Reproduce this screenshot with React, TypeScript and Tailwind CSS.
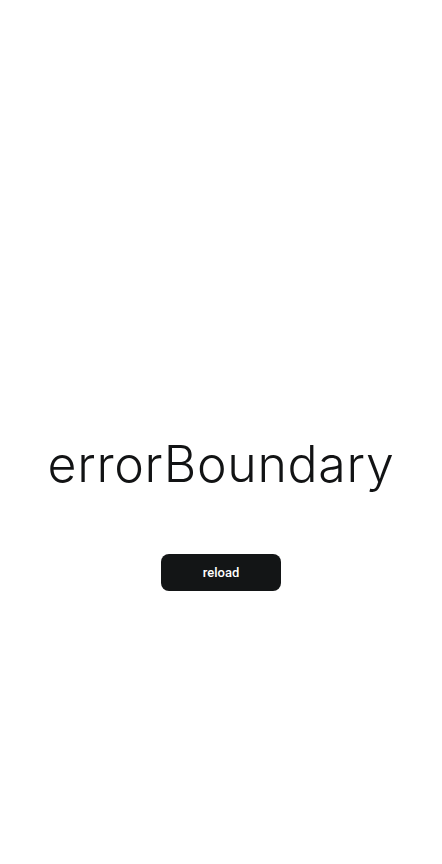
export default function App() {
  return (
    <div className="min-h-screen bg-white flex flex-col items-center pt-[435px]">
      <h1 className="font-['Inter','Noto_Sans',sans-serif] text-[50px] leading-[58px] font-light text-[#121314] tracking-[0.7px]">
        errorBoundary
      </h1>
      <button className="mt-[61px] w-[120px] h-[37px] rounded-[8px] bg-[#131516] text-white text-[13px] font-medium font-['Roboto','Liberation_Sans',sans-serif]">
        reload
      </button>
    </div>
  );
}
